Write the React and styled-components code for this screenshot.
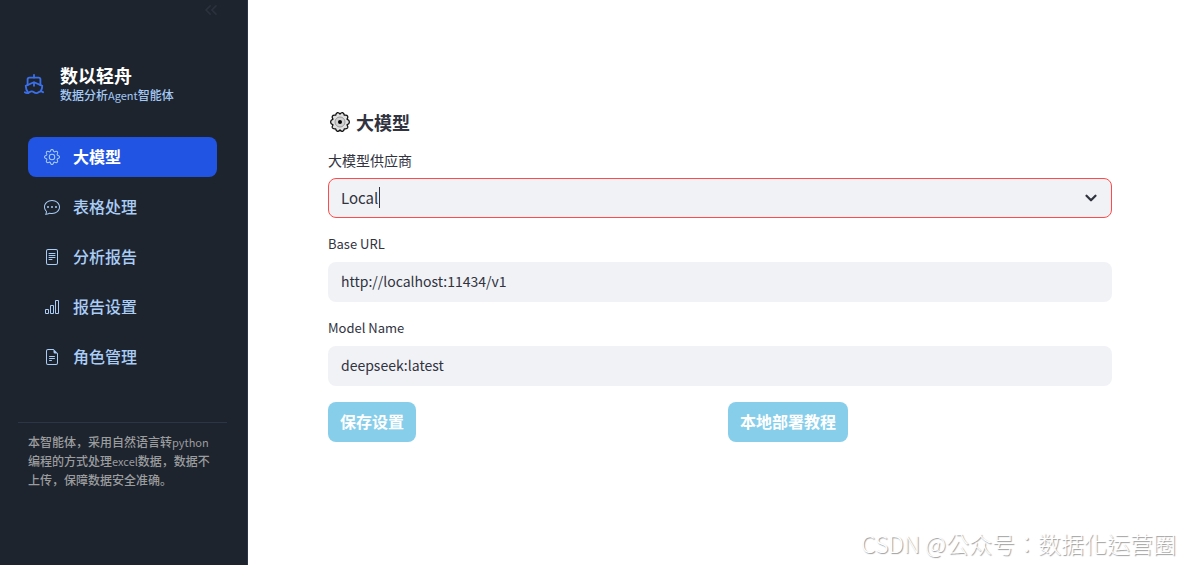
import { useState } from "react";
import styled, { createGlobalStyle } from "styled-components";
import { ChevronDown, ChevronsLeft, Ship } from "lucide-react";
import {
  BsBarChart,
  BsChatDots,
  BsFileEarmarkText,
  BsFileText,
  BsGear,
} from "react-icons/bs";

const GlobalStyle = createGlobalStyle`
  * {
    box-sizing: border-box;
  }
  body {
    margin: 0;
    background: #ffffff;
    color: #31333f;
    font-family: "Noto Sans CJK SC", sans-serif;
  }
  button, input, select {
    font-family: inherit;
  }
`;

const Page = styled.div`
  display: flex;
  min-height: 100vh;
`;

const Sidebar = styled.aside`
  position: relative;
  flex: 0 0 248px;
  padding: 64px 20px 0 18px;
  background: #1d242e;
  border-right: 1px solid #2a3648;
`;

const Collapse = styled.button`
  position: absolute;
  top: 0;
  right: 26px;
  display: flex;
  padding: 0;
  border: 0;
  background: none;
  color: #2b313d;
`;

const Brand = styled.header`
  display: flex;
  align-items: center;
  gap: 15px;
  padding-left: 5px;
  color: #3b6fea;
`;

const BrandName = styled.h1`
  margin: 0;
  color: #ffffff;
  font-size: 18px;
  font-weight: 700;
  line-height: 22px;
`;

const BrandNote = styled.p`
  margin: 0;
  color: #a3c8f5;
  font-size: 12px;
  font-weight: 500;
  line-height: 18px;
`;

const Latin = styled.span`
  display: inline-block;
  font-size: 11px;
  font-weight: 400;
  line-height: 1;
`;

const Nav = styled.nav`
  display: flex;
  flex-direction: column;
  gap: 10px;
  padding: 33px 10px 45px;
`;

const NavLink = styled.a`
  display: flex;
  align-items: center;
  gap: 13px;
  height: 40px;
  padding: 0 16px;
  border-radius: 8px;
  background: ${(p) => (p.$active ? "#2154e2" : "transparent")};
  color: ${(p) => (p.$active ? "#ffffff" : "#a9cdf7")};
  font-size: 16px;
  font-weight: ${(p) => (p.$active ? 700 : 500)};
  text-decoration: none;
  svg {
    color: #a9cdf7;
  }
  span {
    padding-bottom: 2px;
  }
`;

const About = styled.p`
  margin: 0;
  padding: 9px 10px;
  border-top: 1px solid #2a3648;
  color: #9b9c9e;
  font-size: 12px;
  font-weight: 500;
  line-height: 19px;
`;

const Main = styled.main`
  position: relative;
  flex: 1;
  min-width: 0;
  padding: 108px 68px 80px 80px;
`;

const Heading = styled.h2`
  display: flex;
  align-items: center;
  gap: 5px;
  margin: 0 0 14px;
  padding-left: 1px;
  font-size: 18px;
  font-weight: 700;
  line-height: 28px;
`;

const Form = styled.form`
  display: flex;
  flex-direction: column;
  gap: 16px;
`;

const Field = styled.div`
  display: flex;
  flex-direction: column;
  gap: 8px;
`;

const Label = styled.label`
  font-size: ${(p) => (p.$latin ? 13 : 14)}px;
  font-weight: 400;
  line-height: 20px;
`;

const Input = styled.input`
  width: 100%;
  height: 40px;
  padding: 0 13px 3px;
  border: 0;
  border-radius: 8px;
  outline: none;
  background: #f0f2f6;
  color: #31333f;
  font-size: 14px;
`;

const SelectBox = styled.div`
  position: relative;
  svg {
    position: absolute;
    top: 11px;
    right: 12px;
    pointer-events: none;
  }
`;

const Select = styled.select`
  display: block;
  width: 100%;
  height: 40px;
  padding: 0 12px 2px;
  border: 1px solid #ff4b4b;
  border-radius: 8px;
  outline: none;
  appearance: none;
  background: #f0f2f6;
  color: #31333f;
  font-size: 15px;
`;

const Caret = styled.span`
  position: absolute;
  top: 9px;
  left: 51px;
  width: 1px;
  height: 21px;
  background: #31333f;
`;

const Actions = styled.div`
  display: grid;
  grid-template-columns: 1fr 1fr;
  justify-items: start;
  gap: 16px;
`;

const Button = styled.button`
  height: 40px;
  padding: 0 12px 2px;
  border: 0;
  border-radius: 8px;
  background: #87ceeb;
  color: #ffffff;
  font-size: 16px;
  font-weight: 700;
`;

const Watermark = styled.div`
  position: absolute;
  right: 4px;
  bottom: 4px;
  color: #ffffff;
  font-family: "Noto Sans CJK TC", sans-serif;
  font-size: 23px;
  font-weight: 300;
  line-height: 36px;
  text-shadow: 1px 1px 1px #999999;
  white-space: nowrap;
`;

const links = [
  { label: "大模型", icon: BsGear },
  { label: "表格处理", icon: BsChatDots },
  { label: "分析报告", icon: BsFileText },
  { label: "报告设置", icon: BsBarChart },
  { label: "角色管理", icon: BsFileEarmarkText },
];

function GearIcon() {
  return (
    <svg width="22" height="22" viewBox="0 0 22 22" fill="none" aria-hidden="true">
      <path
        d="M8.500 1.700Q9.800 1.500 11 3Q12.200 1.500 13.500 1.700Q15 2.200 15.300 4.200Q18 3.800 18.700 5.200Q19.200 6.500 18 8.200Q20.500 9.200 20.400 11Q20.500 12.800 18 13.800Q19.200 15.500 18.700 16.800Q18 18.200 15.300 17.800Q15 19.800 13.500 20.300Q12.200 20.500 11 19Q9.800 20.500 8.500 20.300Q7 19.800 6.700 17.800Q4 18.200 3.300 16.800Q2.800 15.500 4 13.800Q1.500 12.800 1.600 11Q1.500 9.200 4 8.200Q2.800 6.500 3.300 5.200Q4 3.800 6.700 4.200Q7 2.200 8.500 1.700Z"
        fill="#e2e2e2"
        stroke="#111111"
        strokeWidth="1.300"
        strokeLinejoin="round"
      />
      <circle cx="11" cy="11" r="5" fill="#d2d2d2" stroke="#9a9a9a" />
      <circle cx="11" cy="11" r="2" fill="#000000" />
    </svg>
  );
}

export default function App() {
  const [active, setActive] = useState("大模型");
  const [url, setUrl] = useState("http://localhost:11434/v1");
  const [model, setModel] = useState("deepseek:latest");

  return (
    <Page>
      <GlobalStyle />
      <Sidebar>
        <Collapse type="button" aria-label="收起">
          <ChevronsLeft size={20} />
        </Collapse>
        <Brand>
          <Ship size={22} />
          <div>
            <BrandName>数以轻舟</BrandName>
            <BrandNote>
              数据分析<Latin>Agent</Latin>智能体
            </BrandNote>
          </div>
        </Brand>
        <Nav>
          {links.map(({ label, icon: Icon }) => (
            <NavLink
              key={label}
              href="#"
              $active={label === active}
              onClick={() => setActive(label)}
            >
              <Icon size={16} />
              <span>{label}</span>
            </NavLink>
          ))}
        </Nav>
        <About>
          本智能体，采用自然语言转<Latin>python</Latin>编程的方式处理
          <Latin>excel</Latin>数据，数据不上传，保障数据安全准确。
        </About>
      </Sidebar>
      <Main>
        <Heading>
          <GearIcon />
          大模型
        </Heading>
        <Form onSubmit={(e) => e.preventDefault()}>
          <Field>
            <Label htmlFor="provider">大模型供应商</Label>
            <SelectBox>
              <Select id="provider">
                <option>Local</option>
              </Select>
              <Caret />
              <ChevronDown size={18} strokeWidth={3} />
            </SelectBox>
          </Field>
          <Field>
            <Label htmlFor="url" $latin>
              Base URL
            </Label>
            <Input id="url" value={url} onChange={(e) => setUrl(e.target.value)} />
          </Field>
          <Field>
            <Label htmlFor="model" $latin>
              Model Name
            </Label>
            <Input
              id="model"
              value={model}
              onChange={(e) => setModel(e.target.value)}
            />
          </Field>
          <Actions>
            <Button type="submit">保存设置</Button>
            <Button type="button">本地部署教程</Button>
          </Actions>
        </Form>
        <Watermark>CSDN @公众号：数据化运营圈</Watermark>
      </Main>
    </Page>
  );
}
